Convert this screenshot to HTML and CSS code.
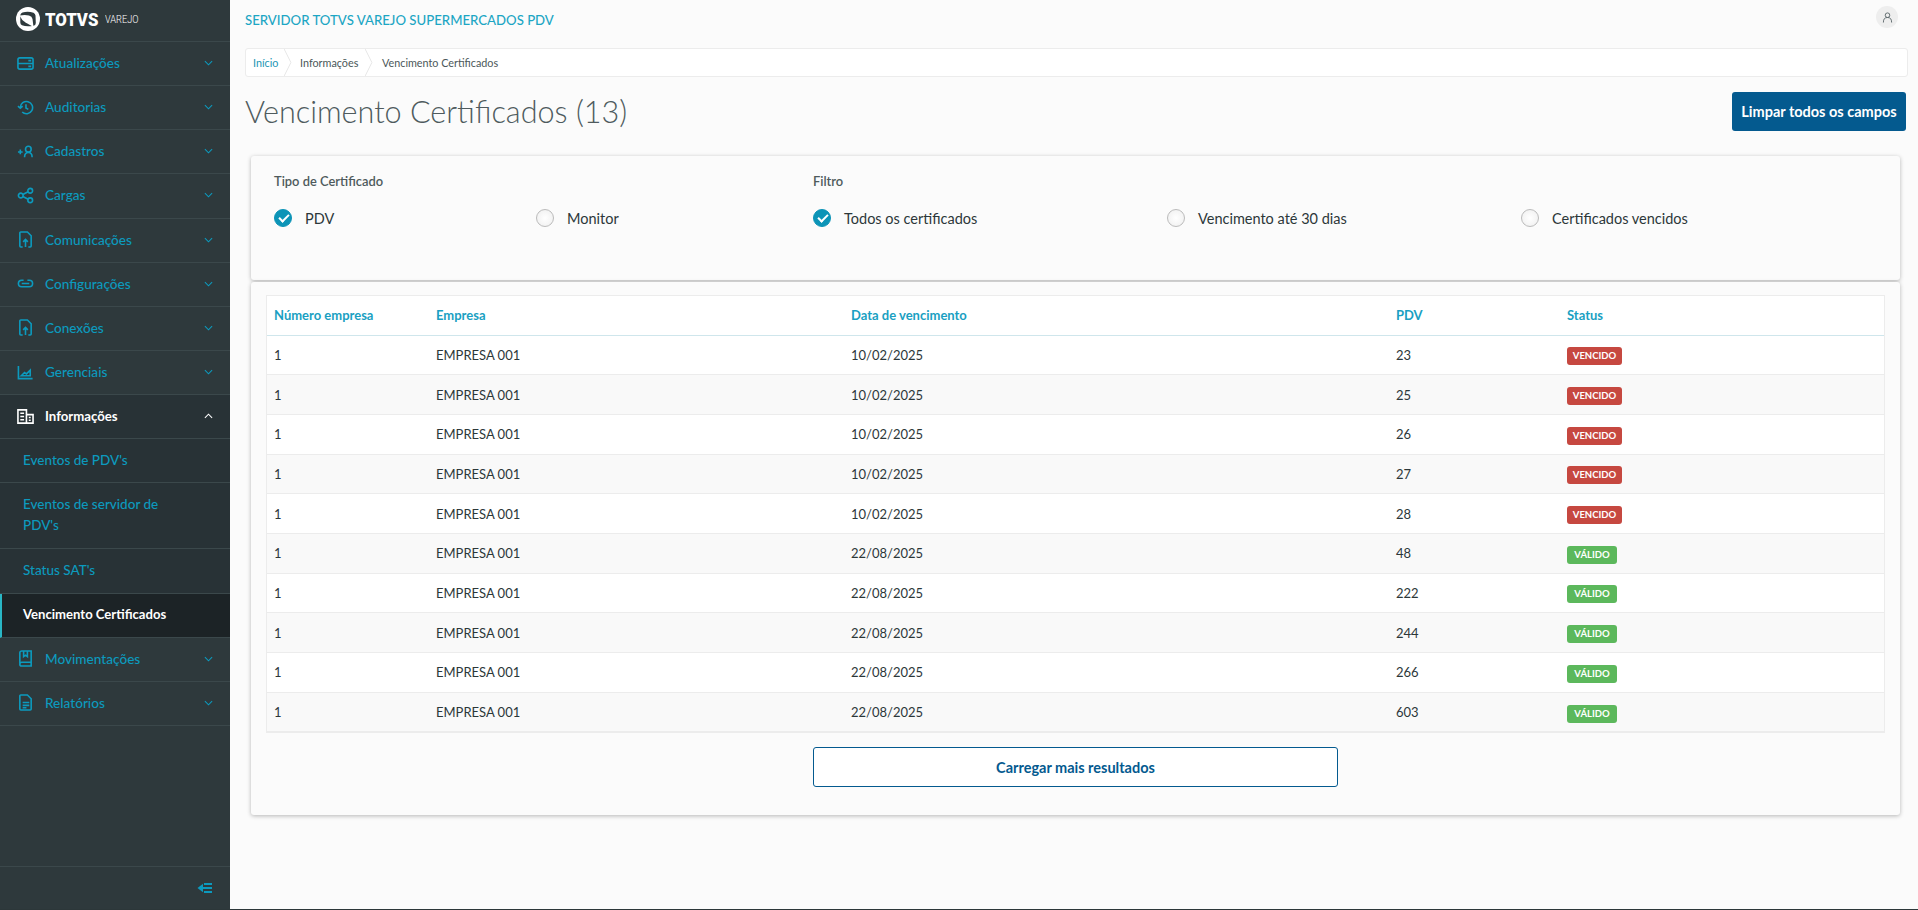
FILE: index.html
```html
<!DOCTYPE html>
<html lang="pt-BR">
<head>
<meta charset="utf-8">
<title>Vencimento Certificados</title>
<link rel="stylesheet" href="styles.css">
</head>
<body>
<div class="app">
<aside class="sidebar">
  <div class="logo">
    <svg class="logo-mark" viewBox="0 0 24 24"><circle cx="12" cy="12" r="12" fill="#fff"/><path d="M6.500 5.500Q12 3.800 17.500 5.800Q19.300 6.700 19.500 8.500L19.800 16Q19.700 18.500 17.500 18.700Q11 20.200 6 18.300Q4.300 17.500 4.300 15.500L4.300 8Q4.700 6 6.500 5.500Z" fill="#2e393c"/><path d="M3.500 8.500Q9 7.500 13 8.500Q16 9.300 16.500 12L17.500 20L9.500 15.500Q5.500 13 3.500 8.500Z" fill="#fff"/></svg>
    <span class="logo-totvs">TOTVS</span><span class="logo-sub">VAREJO</span>
  </div>
  <nav class="nav">
    <a class="nav-item"><svg class="ni" viewBox="0 0 18 14"><rect x="1" y="1" width="16" height="12" rx="2"/><path d="M1 7h16M12 4h3M12 10h3"/></svg><span>Atualizações</span><svg class="chev" viewBox="0 0 10 6"><path d="M1 1l4 4 4-4"/></svg></a>
    <a class="nav-item"><svg class="ni" viewBox="0 0 18 16"><path d="M3.500 8a6.500 6.500 0 1 1 2 4.800M1 6.500l2.500 2.300L6 6.500M9.500 4.500V8.500l2.500 1.500"/></svg><span>Auditorias</span><svg class="chev" viewBox="0 0 10 6"><path d="M1 1l4 4 4-4"/></svg></a>
    <a class="nav-item"><svg class="ni" viewBox="0 0 18 14"><path d="M1 7.500h5M3.500 5v5M8 13c0-3 1.500-5 4-5s4 2 4 5"/><circle cx="12" cy="4.500" r="3"/></svg><span>Cadastros</span><svg class="chev" viewBox="0 0 10 6"><path d="M1 1l4 4 4-4"/></svg></a>
    <a class="nav-item"><svg class="ni" viewBox="0 0 18 16"><circle cx="4" cy="8" r="2.500"/><circle cx="14" cy="3" r="2.500"/><circle cx="14" cy="13" r="2.500"/><path d="M6.200 7l5.600-3M6.200 9l5.600 3"/></svg><span>Cargas</span><svg class="chev" viewBox="0 0 10 6"><path d="M1 1l4 4 4-4"/></svg></a>
    <a class="nav-item"><svg class="ni" viewBox="0 0 18 18"><path d="M6 17H4a1 1 0 0 1-1-1V2a1 1 0 0 1 1-1h7l4 4v11a1 1 0 0 1-1 1h-2M9 17V9M6.500 11.500L9 9l2.500 2.500"/></svg><span>Comunicações</span><svg class="chev" viewBox="0 0 10 6"><path d="M1 1l4 4 4-4"/></svg></a>
    <a class="nav-item"><svg class="ni" viewBox="0 0 18 10"><path d="M7 1.500H5a3.500 3.500 0 0 0 0 7h8a3.500 3.500 0 0 0 0-7h-2M5 5h8"/></svg><span>Configurações</span><svg class="chev" viewBox="0 0 10 6"><path d="M1 1l4 4 4-4"/></svg></a>
    <a class="nav-item"><svg class="ni" viewBox="0 0 18 18"><path d="M6 17H4a1 1 0 0 1-1-1V2a1 1 0 0 1 1-1h7l4 4v11a1 1 0 0 1-1 1h-2M9 17V9M6.500 11.500L9 9l2.500 2.500"/></svg><span>Conexões</span><svg class="chev" viewBox="0 0 10 6"><path d="M1 1l4 4 4-4"/></svg></a>
    <a class="nav-item"><svg class="ni" viewBox="0 0 18 16"><path d="M1.500 1v13.500h15M4.500 11.500l3.500-3.500 2 1.500 4-4v6z"/></svg><span>Gerenciais</span><svg class="chev" viewBox="0 0 10 6"><path d="M1 1l4 4 4-4"/></svg></a>
    <a class="nav-item open"><svg class="ni" viewBox="0 0 18 16"><path d="M1 1h9v14H1zM10 6h7v9h-7zM3.500 4.500h4M3.500 8h4M3.500 11.500h4M12.500 9h2M12.500 12h2"/></svg><span>Informações</span><svg class="chev" viewBox="0 0 10 6"><path d="M1 5l4-4 4 4"/></svg></a>
    <a class="nav-sub">Eventos de PDV's</a>
    <a class="nav-sub two-line">Eventos de servidor de PDV's</a>
    <a class="nav-sub">Status SAT's</a>
    <a class="nav-sub current">Vencimento Certificados</a>
    <a class="nav-item"><svg class="ni" viewBox="0 0 18 18"><path d="M3 14V3a2 2 0 0 1 2-2h10v12H5a2 2 0 0 0 0 4h10v-4M7 1v6l2-1.500L11 7V1"/></svg><span>Movimentações</span><svg class="chev" viewBox="0 0 10 6"><path d="M1 1l4 4 4-4"/></svg></a>
    <a class="nav-item"><svg class="ni" viewBox="0 0 18 18"><path d="M3 2a1 1 0 0 1 1-1h7l4 4v11a1 1 0 0 1-1 1H4a1 1 0 0 1-1-1zM6 9h7M6 12h7M6 14.500h4"/></svg><span>Relatórios</span><svg class="chev" viewBox="0 0 10 6"><path d="M1 1l4 4 4-4"/></svg></a>
  </nav>
  <div class="side-foot"><svg class="collapse" viewBox="0 0 16 12"><path d="M7 2h8M5 6h10M7 10h8"/><path class="arrow" d="M0.500 6L6 1.800v8.400z"/></svg></div>
</aside>
<main class="main">
  <header class="topbar">
    <span class="server">SERVIDOR TOTVS VAREJO SUPERMERCADOS PDV</span>
    <span class="user"><svg viewBox="0 0 12 12"><circle cx="6" cy="3.500" r="2.500"/><path d="M1.500 11.500c0-4 1.500-5.500 4.500-5.500s4.500 1.500 4.500 5.500"/></svg></span>
  </header>
  <div class="crumbs">
    <a class="crumb first">Início<svg class="sep" viewBox="0 0 8 28"><path d="M0 0l7 14-7 14"/></svg></a>
    <span class="crumb second">Informações<svg class="sep" viewBox="0 0 8 28"><path d="M0 0l7 14-7 14"/></svg></span>
    <span class="crumb last">Vencimento Certificados</span>
  </div>
  <div class="title-row">
    <h1>Vencimento Certificados (13)</h1>
    <button class="btn-primary">Limpar todos os campos</button>
  </div>
  <section class="card filters">
    <div class="group g1">
      <div class="g-label">Tipo de Certificado</div>
      <div class="opts">
        <label class="opt on"><i></i>PDV</label>
        <label class="opt"><i></i>Monitor</label>
      </div>
    </div>
    <div class="group g2">
      <div class="g-label">Filtro</div>
      <div class="opts">
        <label class="opt on"><i></i>Todos os certificados</label>
        <label class="opt"><i></i>Vencimento até 30 dias</label>
        <label class="opt"><i></i>Certificados vencidos</label>
      </div>
    </div>
  </section>
  <section class="card results">
    <table class="grid">
      <colgroup><col class="c1"><col class="c2"><col class="c3"><col class="c4"><col></colgroup>
      <thead><tr><th>Número empresa</th><th>Empresa</th><th>Data de vencimento</th><th>PDV</th><th>Status</th></tr></thead>
      <tbody>
        <tr><td>1</td><td>EMPRESA 001</td><td>10/02/2025</td><td>23</td><td><span class="tag bad">VENCIDO</span></td></tr>
        <tr><td>1</td><td>EMPRESA 001</td><td>10/02/2025</td><td>25</td><td><span class="tag bad">VENCIDO</span></td></tr>
        <tr><td>1</td><td>EMPRESA 001</td><td>10/02/2025</td><td>26</td><td><span class="tag bad">VENCIDO</span></td></tr>
        <tr><td>1</td><td>EMPRESA 001</td><td>10/02/2025</td><td>27</td><td><span class="tag bad">VENCIDO</span></td></tr>
        <tr><td>1</td><td>EMPRESA 001</td><td>10/02/2025</td><td>28</td><td><span class="tag bad">VENCIDO</span></td></tr>
        <tr><td>1</td><td>EMPRESA 001</td><td>22/08/2025</td><td>48</td><td><span class="tag good">VÁLIDO</span></td></tr>
        <tr><td>1</td><td>EMPRESA 001</td><td>22/08/2025</td><td>222</td><td><span class="tag good">VÁLIDO</span></td></tr>
        <tr><td>1</td><td>EMPRESA 001</td><td>22/08/2025</td><td>244</td><td><span class="tag good">VÁLIDO</span></td></tr>
        <tr><td>1</td><td>EMPRESA 001</td><td>22/08/2025</td><td>266</td><td><span class="tag good">VÁLIDO</span></td></tr>
        <tr><td>1</td><td>EMPRESA 001</td><td>22/08/2025</td><td>603</td><td><span class="tag good">VÁLIDO</span></td></tr>
      </tbody>
    </table>
    <div class="more"><button class="btn-outline">Carregar mais resultados</button></div>
  </section>
</main>
</div>
</body>
</html>
```

FILE: styles.css
```css
* { box-sizing: border-box; }
html, body { margin: 0; height: 100%; overflow: hidden; }
body { font-family: "Lato", "Open Sans", sans-serif; background: #fbfbfb; color: #2c3739; font-size: 13px; border-bottom: 1px solid #2c3739; }
.app { display: flex; height: 909px; }

.sidebar { width: 230px; flex: none; background: #2e393c; display: flex; flex-direction: column; height: 909px; }
.logo { height: 42px; display: flex; align-items: center; padding: 0 0 3px 16px; color: #fff; border-bottom: 1px solid #3b484b; flex: none; }
.logo-mark { width: 24px; height: 24px; margin-right: 5px; flex: none; }
.logo-totvs { font-family: "Roboto", sans-serif; font-weight: 900; font-size: 19px; display: inline-block; width: 56px; transform: scaleX(.88); transform-origin: left center; }
.logo-sub { font-family: "Roboto", sans-serif; font-weight: 300; font-size: 11.500px; margin-left: 4px; display: inline-block; transform: scaleX(.8); transform-origin: left center; }
.nav { flex: 1; display: flex; flex-direction: column; }
.nav-item { height: 44.150px; display: flex; align-items: center; padding: 0 17px 1px; color: #0c9abe; font-size: 13.600px; font-weight: 500; border-bottom: 1px solid #3b484b; }
.nav-item span { margin-left: 11px; flex: 1; }
.ni { width: 17px; height: 17px; fill: none; stroke: currentColor; stroke-width: 1.700; flex: none; }
.chev { width: 9px; height: 6px; fill: none; stroke: currentColor; stroke-width: 1.200; flex: none; }
.nav-item.open { background: #283236; color: #fff; font-weight: 700; font-size: 13.200px; }
.nav-sub { display: flex; align-items: center; height: 44.150px; padding: 0 40px 1px 23px; color: #0c9abe; font-size: 13.500px; font-weight: 500; line-height: 21px; background: #283236; border-bottom: 1px solid #3b484b; }
.nav-sub.two-line { height: 66px; }
.nav-sub.current { background: #1c2326; color: #fff; font-weight: 700; font-size: 13.100px; border-left: 2px solid #29b6c5; padding-left: 21px; }
.side-foot { flex: none; height: 43px; border-top: 1px solid #3b484b; display: flex; align-items: center; justify-content: flex-end; padding: 0 17px 0 0; }
.collapse { width: 16px; height: 12px; fill: none; stroke: #0c9abe; stroke-width: 1.800; }
.collapse .arrow { fill: #0c9abe; stroke: none; }

.main { flex: 1; min-width: 0; padding: 0 10px 0 15px; }
.topbar { height: 48px; display: flex; align-items: center; justify-content: space-between; padding: 0 10px 8px 0; }
.server { color: #1da6c4; font-size: 13.200px; font-weight: 500; }
.user { width: 22px; height: 22px; border-radius: 50%; background: #eee; display: flex; align-items: center; justify-content: center; margin-top: -6px; }
.user svg { width: 11px; height: 11px; fill: none; stroke: #5a6669; stroke-width: 1; }
.crumbs { height: 29px; background: #fff; border: 1px solid #ececec; border-radius: 3px; display: flex; align-items: center; overflow: hidden; color: #4b5759; font-size: 10.800px; }
.crumb { position: relative; height: 100%; display: flex; align-items: center; }
.crumb.first { color: #1b95b4; width: 39px; padding-left: 7px; }
.crumb.second { width: 81px; padding-left: 15px; }
.crumb.last { padding-left: 16px; }
.sep { position: absolute; right: -7px; top: 0; width: 8px; height: 27px; fill: none; stroke: #e6e6e6; stroke-width: 1; }
.title-row { display: flex; justify-content: space-between; align-items: flex-start; height: 79px; padding: 15px 2px 0 0; }
h1 { margin: 0; font-family: "Lato", sans-serif; font-size: 30.600px; font-weight: 300; color: #4f5b5e; line-height: 39px; }
.btn-primary { width: 174px; height: 39px; background: #045a8f; color: #fff; border: 0; border-radius: 3px; font: 700 14.500px "Lato", sans-serif; padding: 0; }
.card { background: #fbfbfb; margin: 0 8px 0 6px; border-radius: 3px; box-shadow: 0 1px 4px rgba(0,0,0,.28); }
.filters { height: 124px; display: flex; padding: 17px 0 0 23px; margin-bottom: 2px; }
.g-label { font-size: 12.900px; font-weight: 600; color: #4e5a5c; height: 22px; line-height: 17px; }
.opts { display: flex; margin-top: 12px; }
.g1 { width: 539px; } .g1 .opt { width: 262px; }
.g2 .opt { width: 354px; }
.opt { display: flex; align-items: center; font-size: 14.500px; color: #2c3739; height: 22px; }
.opt i { width: 18px; height: 18px; border-radius: 50%; border: 1px solid #bbb; margin-right: 13px; background: radial-gradient(circle, #fff, #eee); position: relative; flex: none; }
.opt.on i { background: #0c94b7; border-color: #0c94b7; }
.opt.on i::after { content: ""; position: absolute; left: 4px; top: 4px; width: 8px; height: 4px; border-left: 2px solid #fff; border-bottom: 2px solid #fff; transform: rotate(-45deg); }
.results { height: 533px; padding: 14px 16px 0 16px; }
.grid { width: 100%; border-collapse: collapse; table-layout: fixed; background: #fff; outline: 1px solid #ececec; font-size: 13px; }
.c1 { width: 162px; } .c2 { width: 415px; } .c3 { width: 545px; } .c4 { width: 171px; }
.grid th { height: 39px; padding: 0 7px; text-align: left; color: #1a9fc2; font-size: 13px; font-weight: 700; border-bottom: 1px solid #cfe6ec; }
.grid td { height: 39.700px; padding: 0 7px; color: #2c3739; border-bottom: 1px solid #ececec; }
.grid tbody tr:nth-child(even) { background: #f9f9f9; }
.tag { display: inline-block; vertical-align: middle; margin-top: 3px; width: 55px; height: 18px; line-height: 18px; text-align: center; color: #fff; font-size: 9.500px; font-weight: 700; border-radius: 3px; }
.tag.bad { background: #c64840; }
.tag.good { background: #5cb85c; width: 50px; }
.more { display: flex; justify-content: center; margin-top: 15px; }
.btn-outline { width: 525px; height: 40px; background: #fff; color: #045a8f; border: 1px solid #045a8f; border-radius: 3px; font: 700 14.500px "Lato", sans-serif; }
```
